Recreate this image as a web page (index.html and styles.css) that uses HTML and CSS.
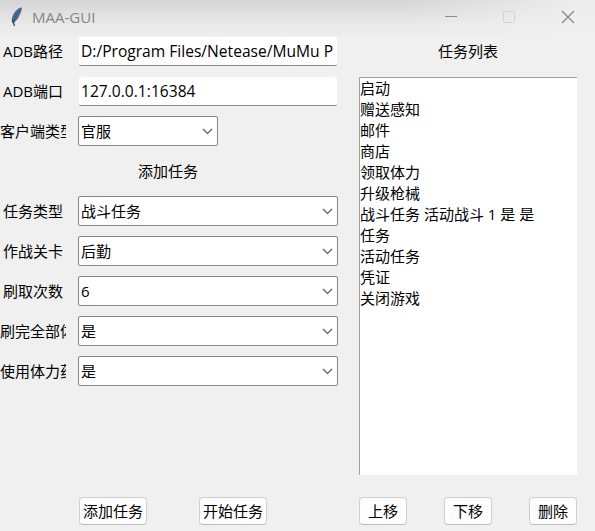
FILE: index.html
```html
<!DOCTYPE html>
<html lang="zh-CN">
<head>
<meta charset="utf-8">
<title>MAA-GUI</title>
<link rel="stylesheet" href="styles.css">
</head>
<body>
<div class="window">
  <header class="titlebar">
    <svg class="feather" width="16" height="20" viewBox="0 0 16 20">
      <path d="M13.300 .8C10 1.500 6.800 5 5.200 8.600C4.200 11 4.100 13.500 4.600 15.800C7.200 14.800 9.400 12.300 10.500 9.500C11.800 6.500 13.800 3 13.300 .8Z" fill="#3a70ab" stroke="#5b6068" stroke-width=".9"/>
      <path d="M11.600 3.200C8.800 7 6.500 11 5.200 15.500" fill="none" stroke="#3b4f68" stroke-width=".9"/>
      <path d="M4.500 12.500L5.500 15.500L6.500 19" fill="none" stroke="#3f3f3f" stroke-width="1.200"/>
    </svg>
    <span class="caption">MAA-GUI</span>
    <svg class="controls" width="136" height="14" viewBox="0 0 136 14" fill="none">
      <path d="M1 6.500H13" stroke="#8b8b8b"/>
      <rect x="59.500" y="1.500" width="11" height="11" rx="1" stroke="#d2d2d2"/>
      <path d="M118 1L130 13M130 1L118 13" stroke="#828282" stroke-width="1.100"/>
    </svg>
  </header>
  <main class="content">
    <section class="form">
      <div class="row"><span class="label">ADB路径</span><div class="entry">D:/Program Files/Netease/MuMu P</div></div>
      <div class="row"><span class="label">ADB端口</span><div class="entry">127.0.0.1:16384</div></div>
      <div class="row"><span class="label clip">客户端类型</span><div class="combo short">官服<svg class="arrow" width="11" height="7" viewBox="0 0 11 7"><path d="M1 1L5.500 5.500L10 1"/></svg></div></div>
      <div class="row heading">添加任务</div>
      <div class="row"><span class="label">任务类型</span><div class="combo">战斗任务<svg class="arrow" width="11" height="7" viewBox="0 0 11 7"><path d="M1 1L5.500 5.500L10 1"/></svg></div></div>
      <div class="row"><span class="label">作战关卡</span><div class="combo">后勤<svg class="arrow" width="11" height="7" viewBox="0 0 11 7"><path d="M1 1L5.500 5.500L10 1"/></svg></div></div>
      <div class="row"><span class="label">刷取次数</span><div class="combo">6<svg class="arrow" width="11" height="7" viewBox="0 0 11 7"><path d="M1 1L5.500 5.500L10 1"/></svg></div></div>
      <div class="row"><span class="label clip">刷完全部体</span><div class="combo">是<svg class="arrow" width="11" height="7" viewBox="0 0 11 7"><path d="M1 1L5.500 5.500L10 1"/></svg></div></div>
      <div class="row"><span class="label clip">使用体力药</span><div class="combo">是<svg class="arrow" width="11" height="7" viewBox="0 0 11 7"><path d="M1 1L5.500 5.500L10 1"/></svg></div></div>
      <div class="actions"><div class="button wide">添加任务</div><div class="button wide">开始任务</div></div>
    </section>
    <section class="tasks">
      <div class="row tasks-title">任务列表</div>
      <ul class="list">
        <li>启动</li>
        <li>赠送感知</li>
        <li>邮件</li>
        <li>商店</li>
        <li>领取体力</li>
        <li>升级枪械</li>
        <li>战斗任务 活动战斗 1 是 是</li>
        <li>任务</li>
        <li>活动任务</li>
        <li>凭证</li>
        <li>关闭游戏</li>
      </ul>
      <div class="list-actions"><div class="button">上移</div><div class="button">下移</div><div class="button">删除</div></div>
    </section>
  </main>
</div>
</body>
</html>
```
FILE: styles.css
```css
* { box-sizing: border-box; }
body {
  margin: 0;
  font: 15px/21px "Open Sans", "Noto Sans CJK SC", sans-serif;
  color: #000;
}
.window {
  width: 595px;
  height: 531px;
  overflow: hidden;
  background: #f0f0f0;
  display: flex;
  flex-direction: column;
}
.titlebar {
  height: 36px;
  flex: none;
  display: flex;
  align-items: center;
  padding: 0 15px 2px 8px;
  background: linear-gradient(90deg, rgba(240,240,240,0) 68%, rgba(240,240,240,.85) 96%), linear-gradient(#d5d5d5, #eaeaea 70%, #ededed);
}
.caption { margin-left: 8px; color: #858585; flex: 1; }
.content { flex: 1; display: flex; }
.form { width: 338px; display: flex; flex-direction: column; gap: 10px; }
.row { height: 30px; display: flex; align-items: center; flex: none; }
.label {
  width: 66px;
  margin-right: 12px;
  flex: none;
  text-align: center;
  white-space: nowrap;
  overflow: hidden;
}
.label.clip { text-align: left; }
.entry {
  width: 258px;
  height: 29px;
  margin: 1px 0 0 1px;
  padding: 4px 0 0 2px;
  background: #fff;
  border-bottom: 1px solid #868686;
  border-radius: 2px;
  font-size: 15.6px;
  white-space: nowrap;
  overflow: hidden;
}
.combo {
  width: 260px;
  height: 30px;
  padding: 0 4px 0 2px;
  background: #fff;
  border: 1px solid #868686;
  border-radius: 2px;
  display: flex;
  align-items: center;
  justify-content: space-between;
}
.combo.short { width: 140px; }
.arrow { fill: none; stroke: #555; stroke-width: 1.1; }
.heading { padding-left: 138px; }
.actions, .list-actions { display: flex; margin-top: auto; margin-bottom: 6px; }
.actions { padding-left: 79px; gap: 52px; }
.button {
  width: 48px;
  height: 28px;
  background: #fdfdfd;
  border: 1px solid #d0d0d0;
  border-bottom-color: #bdbdbd;
  border-radius: 4px;
  display: flex;
  align-items: center;
  justify-content: center;
  white-space: nowrap;
}
.button.wide { width: 68px; }
.tasks { width: 218px; margin-left: 21px; display: flex; flex-direction: column; }
.tasks-title { justify-content: center; }
.list {
  height: 398px;
  margin: 11px 0 0;
  padding: 0;
  list-style: none;
  background: #fff;
  border-top: 1px solid #a0a0a0;
  border-left: 1px solid #a0a0a0;
}
.list li { height: 21px; white-space: nowrap; }
.list-actions { justify-content: space-between; }
```
